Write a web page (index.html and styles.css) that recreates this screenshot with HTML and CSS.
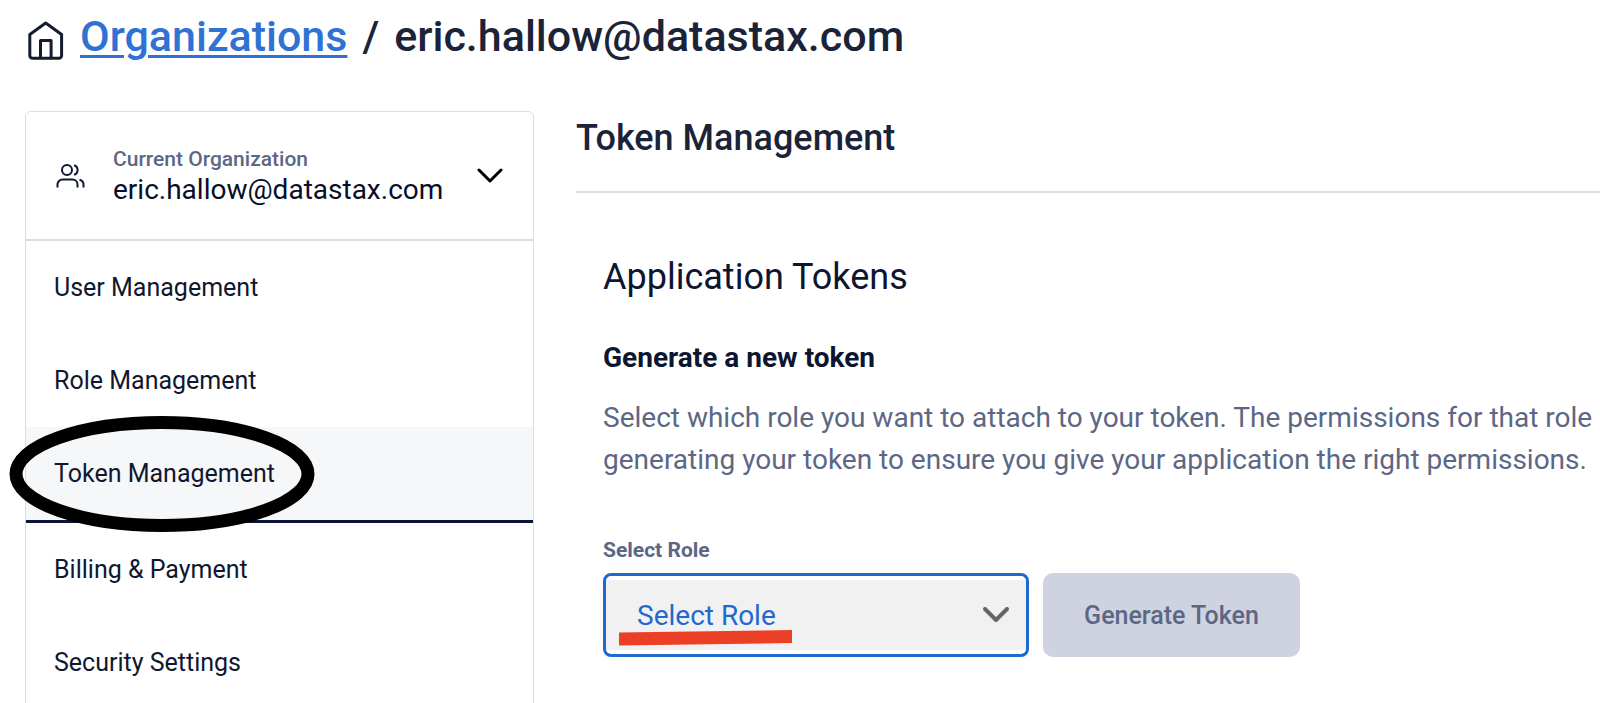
FILE: index.html
```html
<!DOCTYPE html>
<html lang="en">
<head>
  <meta charset="utf-8">
  <title>Token Management</title>
  <link rel="stylesheet" href="styles.css">
</head>
<body>
  <div class="page">
    <header class="breadcrumb">
      <svg class="home-icon" viewBox="0 0 36 40" aria-hidden="true">
        <path d="M1.800 13.500 17.700 2 33.600 13.500V34.500a2.800 2.800 0 0 1-2.800 2.800H4.600a2.800 2.800 0 0 1-2.800-2.800z"/>
        <path d="M12.500 37V19.500h10.600V37"/>
      </svg>
      <h1 class="crumbs">
        <a class="crumb-link" href="#">Organizations</a>
        <span class="crumb-sep">/</span>
        <span>eric.hallow@datastax.com</span>
      </h1>
    </header>

    <div class="layout">
      <aside class="sidebar">
        <button class="org-switch" type="button">
          <svg class="users-icon" viewBox="0 0 30 26" aria-hidden="true">
            <circle cx="11" cy="7" r="5"/>
            <path d="M1.500 24.500v-3a5 5 0 0 1 5-5h10a5 5 0 0 1 5 5v3"/>
            <path d="M18 2.200a5 5 0 0 1 0 9.600"/>
            <path d="M23.500 16.700a5 5 0 0 1 4 4.800v3"/>
          </svg>
          <span class="org-text">
            <span class="org-label">Current Organization</span>
            <span class="org-name">eric.hallow@datastax.com</span>
          </span>
          <svg class="chevron" viewBox="0 0 26 16" aria-hidden="true"><path d="M2 2 13 13 24 2"/></svg>
        </button>
        <nav class="menu">
          <a class="menu-item" href="#">User Management</a>
          <a class="menu-item" href="#">Role Management</a>
          <a class="menu-item menu-item-active" href="#">Token Management
            <svg class="circle-mark" viewBox="0 0 320 118" aria-hidden="true"><ellipse cx="160" cy="59" rx="146" ry="51.500"/></svg>
          </a>
          <a class="menu-item" href="#">Billing &amp; Payment</a>
          <a class="menu-item" href="#">Security Settings</a>
        </nav>
      </aside>

      <main class="content">
        <h2 class="title">Token Management</h2>
        <section class="panel">
          <h3 class="panel-title">Application Tokens</h3>
          <h4 class="panel-subtitle">Generate a new token</h4>
          <p class="description">Select which role you want to attach to your token. The permissions for that role<br>generating your token to ensure you give your application the right permissions.</p>
          <form class="token-form">
            <label class="field-label" for="role">Select Role</label>
            <div class="controls">
              <div class="select-box">
                <select class="select" id="role"><option>Select Role</option></select>
                <svg class="chevron select-chevron" viewBox="0 0 26 16" aria-hidden="true"><path d="M2 2 13 13 24 2"/></svg>
                <svg class="underline-mark" viewBox="0 0 174 16" aria-hidden="true"><path d="M0 2.500 173 0V13L0 15.500z"/></svg>
              </div>
              <button class="generate" type="button" disabled>Generate Token</button>
            </div>
          </form>
        </section>
      </main>
    </div>
  </div>
</body>
</html>
```
FILE: styles.css
```css
* {
  box-sizing: border-box;
}

body {
  margin: 0;
  background: #fff;
  color: #0d1630;
  font-family: Roboto, "Liberation Sans", sans-serif;
}

h1, h2, h3, h4, p {
  margin: 0;
}

.page {
  height: 100vh;
  overflow: hidden;
  padding: 11px 0 0 25px;
}

.breadcrumb {
  display: flex;
  align-items: center;
  gap: 16px;
  height: 50px;
  padding-left: 3px;
}

.home-icon {
  flex: none;
  width: 36px;
  height: 40px;
  margin-top: 10px;
  fill: none;
  stroke: #141c30;
  stroke-width: 3;
  stroke-linejoin: round;
}

.crumbs {
  display: flex;
  gap: 15px;
  color: #1b2338;
  font-size: 43px;
  font-weight: 500;
  line-height: 50px;
  white-space: nowrap;
}

.crumb-link {
  color: #2f72d3;
  text-decoration-thickness: 3px;
  text-underline-offset: 4px;
}

.layout {
  display: grid;
  grid-template-columns: 509px 1fr;
  gap: 42px;
  margin-top: 50px;
}

.sidebar {
  border: 1px solid #dcdcde;
  border-radius: 6px 6px 0 0;
}

.org-switch {
  display: flex;
  align-items: center;
  width: 100%;
  height: 129px;
  padding: 0 30px;
  border: 0;
  border-bottom: 2px solid #dcdcde;
  background: none;
  color: #080e28;
  font: inherit;
  text-align: left;
}

.users-icon {
  flex: none;
  width: 30px;
  height: 26px;
  margin-right: 27px;
  fill: none;
  stroke: #10183a;
  stroke-width: 2;
}

.org-text {
  display: flex;
  flex: 1;
  flex-direction: column;
  padding-bottom: 2px;
}

.org-label {
  color: #5b6785;
  font-size: 21px;
  font-weight: 500;
  line-height: 30px;
}

.org-name {
  font-size: 28px;
  line-height: 32px;
}

.chevron {
  flex: none;
  width: 26px;
  height: 16px;
  fill: none;
  stroke: #000;
  stroke-width: 3;
  stroke-linecap: round;
  stroke-linejoin: round;
}

.menu-item {
  display: block;
  position: relative;
  padding: 0 28px;
  color: #10172e;
  font-size: 25px;
  line-height: 93px;
  text-decoration: none;
}

.menu-item-active {
  border-bottom: 3px solid #0a1533;
  background: #f6f7f9;
}

.circle-mark {
  position: absolute;
  top: -12px;
  left: -24px;
  width: 320px;
  height: 118px;
  fill: none;
  stroke: #000;
  stroke-width: 13;
}

.content {
  min-width: 0;
}

.title {
  padding: 4px 0 30px;
  border-bottom: 2px solid #dcdcde;
  color: #1b2338;
  font-size: 36px;
  font-weight: 500;
  line-height: 46px;
}

.panel {
  padding: 60px 0 0 27px;
  white-space: nowrap;
}

.panel-title {
  font-size: 36px;
  font-weight: 400;
  line-height: 48px;
}

.panel-subtitle {
  margin-top: 37px;
  font-size: 28px;
  font-weight: 700;
  line-height: 40px;
}

.description {
  margin-top: 19px;
  color: #5b6785;
  font-size: 28px;
  line-height: 42px;
}

.field-label {
  display: block;
  margin-top: 54px;
  color: #5b6785;
  font-size: 21px;
  font-weight: 700;
  line-height: 30px;
}

.controls {
  display: flex;
  gap: 14px;
  margin-top: 8px;
}

.select-box {
  position: relative;
  width: 426px;
  height: 84px;
  padding: 4px 0;
  border: 3px solid #1f69cf;
  border-radius: 8px;
}

.select {
  width: 100%;
  height: 100%;
  padding: 2px 31px 0;
  border: 0;
  appearance: none;
  background: #f1f1f1;
  color: #1f69cf;
  font: 400 28px/40px Roboto, "Liberation Sans", sans-serif;
}

.select-chevron {
  position: absolute;
  top: 31px;
  right: 17px;
  stroke: #666;
  stroke-width: 4;
  pointer-events: none;
}

.underline-mark {
  position: absolute;
  top: 54px;
  left: 13px;
  width: 174px;
  height: 16px;
  fill: #ec4026;
  pointer-events: none;
}

.generate {
  width: 257px;
  height: 84px;
  padding-top: 3px;
  border: 0;
  border-radius: 10px;
  background: #cfd3df;
  color: #5b6785;
  font: 500 25px/40px Roboto, "Liberation Sans", sans-serif;
}
```
